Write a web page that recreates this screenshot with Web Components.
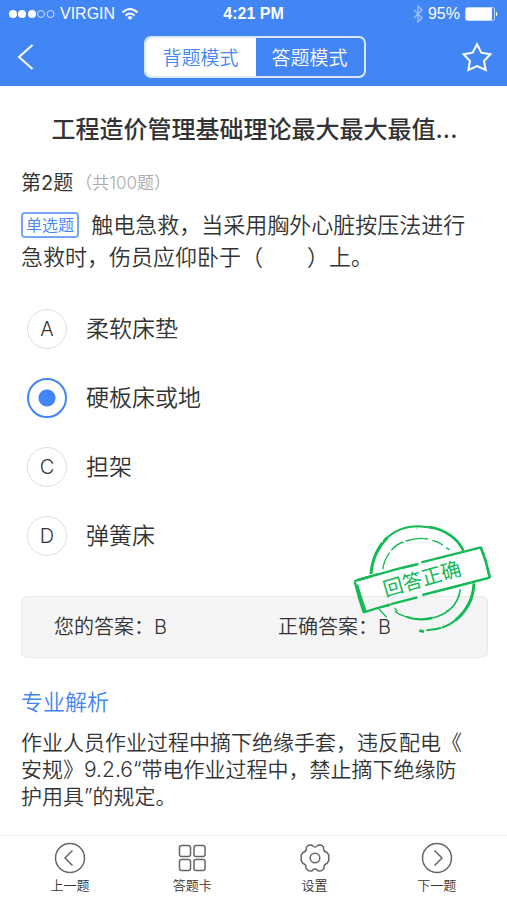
<!DOCTYPE html>
<html lang="zh-CN">
<head>
<meta charset="utf-8">
<meta name="viewport" content="width=device-width, initial-scale=1">
<title>背题模式</title>
<style>
  body {
    margin: 0;
    background: #fff;
    color: #333;
    font-family: Inter, "Noto Sans CJK SC", sans-serif;
    font-weight: 350;
  }
</style>
</head>
<body>
<quiz-app></quiz-app>

<script>
// 状态栏
class StatusBar extends HTMLElement {
  constructor() {
    super();
    this.attachShadow({ mode: 'open' });
  }

  connectedCallback() {
    this.shadowRoot.innerHTML = `
      <style>
        :host {
          display: grid;
          grid-template-columns: 1fr auto 1fr;
          align-items: center;
          height: 28px;
          padding: 0 8px;
          font: 400 16px/20px "Liberation Sans", sans-serif;
          color: #fff;
        }
        div {
          display: flex;
          align-items: center;
          gap: 5px;
        }
        .right { justify-content: flex-end; }
        .time { font-weight: 700; }
        svg { display: block; fill: none; stroke: #fff; }
      </style>
      <div>
        <svg width="47" height="10" viewBox="0 0 47 10">
          <g fill="#fff" stroke="none"><circle cx="5" cy="5" r="4"/><circle cx="14" cy="5" r="4"/><circle cx="24" cy="5" r="4"/></g>
          <g opacity=".75"><circle cx="33" cy="5" r="3.5"/><circle cx="42.500" cy="5" r="3.5"/></g>
        </svg>
        <span>VIRGIN</span>
        <svg width="20" height="14" viewBox="0 0 20 14" stroke-width="2">
          <path d="M2.500 5.500Q10-1.500 17.500 5.500M5.500 8.500Q10 4.500 14.500 8.500"/>
          <path d="M7.300 10.300Q10 8.200 12.700 10.300L10 13Z" fill="#fff" stroke="none"/>
        </svg>
      </div>
      <span class="time">4:21 PM</span>
      <div class="right">
        <svg width="10" height="18" viewBox="0 0 10 18" opacity=".5" stroke-width="1.300"><path d="M1 5L9 13L5 17V1L9 5L1 13"/></svg>
        <span>95%</span>
        <svg width="34" height="14" viewBox="0 0 34 14">
          <rect x=".5" y=".5" width="29" height="13" rx="2" opacity=".7"/>
          <rect x="1" y="1" width="26" height="12" rx="1" fill="#fff" stroke="none"/>
          <path d="M31 4.500Q34 7 31 9.500Z" fill="#fff" stroke="none"/>
        </svg>
      </div>
    `;
  }
}

// 顶部导航：返回、模式切换、收藏
class QuizHeader extends HTMLElement {
  constructor() {
    super();
    this.attachShadow({ mode: 'open' });
  }

  connectedCallback() {
    this.shadowRoot.innerHTML = `
      <style>
        :host {
          display: block;
          height: 86px;
          background: #4285f4;
        }
        .bar {
          display: grid;
          grid-template-columns: 1fr auto 1fr;
          align-items: center;
          height: 58px;
          padding: 0 15px 0 17px;
        }
        button {
          padding: 0;
          border: 0;
          background: none;
          color: #fff;
          font: inherit;
          cursor: pointer;
        }
        .star { justify-self: end; }
        .back { justify-self: start; }
        svg {
          display: block;
          fill: none;
          stroke: #fff;
          stroke-width: 2;
        }
        .modes {
          display: flex;
          box-sizing: border-box;
          height: 42px;
          border: 2px solid #d9e7fd;
          border-radius: 7px;
          overflow: hidden;
        }
        .modes button {
          width: 108px;
          padding-bottom: 2px;
          font-size: 19px;
        }
        .modes .active {
          width: 110px;
          background: #fff;
          color: #4285f4;
        }
      </style>
      <status-bar></status-bar>
      <div class="bar">
        <button class="back" aria-label="返回"><svg width="18" height="28" viewBox="0 0 18 28"><path d="M15.500 2L2 14L15.500 26"/></svg></button>
        <div class="modes">
          <button class="active">背题模式</button>
          <button>答题模式</button>
        </div>
        <button class="star" aria-label="收藏"><svg width="30" height="30" viewBox="0 0 30 30"><path d="M15 2.200L19.300 10.700L28.500 12.200L22 19L23.700 28L15 24L6.300 28L8 19L1.500 12.200L10.700 10.700Z"/></svg></button>
      </div>
    `;
  }
}

// 选项
class QuizOption extends HTMLElement {
  constructor() {
    super();
    this.attachShadow({ mode: 'open' });
  }

  connectedCallback() {
    const letter = this.getAttribute('letter');
    const checked = this.hasAttribute('checked');

    this.shadowRoot.innerHTML = `
      <style>
        :host { display: block; }
        label {
          display: flex;
          align-items: center;
          gap: 19px;
          font-size: 23px;
          line-height: 40px;
          cursor: pointer;
        }
        .mark {
          display: grid;
          place-items: center;
        }
        .mark > * { grid-area: 1 / 1; }
        input {
          appearance: none;
          box-sizing: border-box;
          width: 40px;
          height: 40px;
          margin: 0;
          border: 1px solid #ddd;
          border-radius: 50%;
        }
        input:checked {
          border: 2px solid #4285f4;
          background: radial-gradient(circle, #4285f4 8px, transparent 9px);
        }
        .letter {
          font-size: 20px;
        }
      </style>
      <label>
        <span class="mark">
          <input type="radio" name="answer" value="${letter}" ${checked ? 'checked' : ''}>
          ${checked ? '' : `<span class="letter">${letter}</span>`}
        </span>
        <slot></slot>
      </label>
    `;
  }
}

// 答题结果印章
class ResultStamp extends HTMLElement {
  constructor() {
    super();
    this.attachShadow({ mode: 'open' });
  }

  connectedCallback() {
    this.shadowRoot.innerHTML = `
      <style>
        :host { display: block; }
        svg { display: block; }
        text {
          font: 400 60px "Noto Sans CJK SC", sans-serif;
        }
      </style>
      <svg width="140" height="112" viewBox="36 36 420 336" fill="none" stroke="#12b956">
        <defs>
          <filter id="rough" x="-5%" y="-5%" width="110%" height="110%">
            <feTurbulence type="fractalNoise" baseFrequency=".12" numOctaves="2" seed="4"/>
            <feDisplacementMap in="SourceGraphic" scale="5"/>
          </filter>
        </defs>
        <g filter="url(#rough)">
          <path stroke-width="9" d="M93 192C96 151 112 113 142 83"/>
          <path stroke-width="6" d="M138 87C163 62 196 49 236 49L286 54"/>
          <path stroke-width="8" d="M268 51C313 58 354 85 370 122"/>
          <path stroke-width="9" d="M402 220C400 264 379 304 346 331"/>
          <path stroke-width="6" d="M351 327C325 350 295 360 259 361"/>
          <path stroke-width="8" d="M238 362L252 365"/>
          <path stroke-width="4" d="M128 178C131 158 138 142 149 128M154 121C164 109 177 100 190 96M197 93C215 87 242 83 264 87M277 91C291 95 302 100 309 106M318 113L328 119"/>
          <path stroke-width="4" d="M117 297L140 322M164 294L172 304M164 304C178 315 194 320 211 323"/>
          <path stroke-width="7" d="M200 321C223 329 251 330 277 324"/>
          <path stroke-width="5" d="M277 324C322 313 354 284 361 238"/>
          <path stroke-width="7" d="M44 213L184 174L235 162M244 157L423 112"/>
          <path stroke-width="8" d="M422 111L437 153L450 204M94 199L51 211"/>
          <path stroke-width="7" d="M449 203L376 222L247 255M232 262L153 282L70 307"/>
          <path stroke-width="7" d="M44 214L57 263L71 307M51 224L67 276L77 305"/>
          <path stroke-width="3" d="M431 126L446 199M54 208L116 190M90 300L151 287M385 218L446 205"/>
        </g>
        <text transform="rotate(-16 246 206)" x="246" y="228" text-anchor="middle" fill="#12b956" stroke="none">回答正确</text>
      </svg>
    `;
  }
}

// 底部工具栏按钮，图标由 slot 传入
class TabButton extends HTMLElement {
  constructor() {
    super();
    this.attachShadow({ mode: 'open' });
  }

  connectedCallback() {
    this.shadowRoot.innerHTML = `
      <style>
        :host { display: block; }
        button {
          display: flex;
          flex-direction: column;
          align-items: center;
          gap: 2px;
          width: 100%;
          padding: 6px 0 0;
          border: 0;
          background: none;
          color: #333;
          font: inherit;
          font-size: 13px;
          line-height: 18px;
          cursor: pointer;
        }
        ::slotted(svg) {
          display: block;
          width: 32px;
          height: 32px;
          fill: none;
          stroke: #666;
        }
      </style>
      <button><slot></slot><span>${this.getAttribute('label')}</span></button>
    `;
  }
}

// 页面
class QuizApp extends HTMLElement {
  constructor() {
    super();
    this.attachShadow({ mode: 'open' });
  }

  connectedCallback() {
    this.shadowRoot.innerHTML = `
      <style>
        :host {
          display: flex;
          flex-direction: column;
          min-height: 100vh;
        }
        main { padding: 0 19px 0 21px; }
        h1, h2, h3, p { margin: 0; }
        h1 {
          margin-top: 28px;
          font-size: 24px;
          line-height: 32px;
          font-weight: 500;
          text-align: center;
        }
        h2 {
          display: flex;
          align-items: center;
          gap: 2px;
          margin-top: 24px;
          font-size: 20px;
          line-height: 26px;
          font-weight: 400;
        }
        h2 small {
          font-size: 17px;
          font-weight: 350;
          color: #aaa;
        }
        .question {
          margin: 13px 12px 0 0;
          font-size: 22px;
          line-height: 32px;
        }
        .tag {
          display: inline-block;
          margin-right: 6px;
          padding: 0 3px;
          border: 2px solid #76a7f7;
          border-radius: 4px;
          color: #4285f4;
          font-size: 16px;
          line-height: 22px;
          vertical-align: 2px;
        }
        .options {
          display: grid;
          gap: 29px;
          margin: 36px 0 40px;
          padding-left: 6px;
        }
        .result {
          position: relative;
          display: grid;
          grid-template-columns: 224px 1fr;
          padding: 0 32px;
          border: 1px solid #e9e9e9;
          border-radius: 6px;
          background: #f5f5f5;
          font-size: 20px;
          line-height: 60px;
        }
        /* 印章盖在结果框右上角 */
        result-stamp {
          position: absolute;
          top: -75px;
          right: -5px;
        }
        h3 {
          margin-top: 29px;
          font-size: 22px;
          line-height: 30px;
          font-weight: 350;
          color: #4285f4;
        }
        .analysis {
          margin: 12px 18px 20px 0;
          font-size: 21px;
          line-height: 27px;
          line-break: anywhere;
        }
        nav {
          display: grid;
          grid-template-columns: repeat(4, 1fr);
          height: 65px;
          margin-top: auto;
          padding: 0 9px;
          box-sizing: border-box;
          border-top: 1px solid #eee;
        }
      </style>
      <quiz-header></quiz-header>
      <main>
        <h1>工程造价管理基础理论最大最大最值...</h1>
        <h2>第2题<small>（共100题）</small></h2>
        <p class="question"><span class="tag">单选题</span> 触电急救，当采用胸外心脏按压法进行<wbr><span>急救时，伤员应仰卧于（　　）上。</span></p>
        <div class="options">
          <quiz-option letter="A">柔软床垫</quiz-option>
          <quiz-option letter="B" checked>硬板床或地</quiz-option>
          <quiz-option letter="C">担架</quiz-option>
          <quiz-option letter="D">弹簧床</quiz-option>
        </div>
        <div class="result">
          <span>您的答案：B</span>
          <span>正确答案：B</span>
          <result-stamp></result-stamp>
        </div>
        <h3>专业解析</h3>
        <p class="analysis">作业人员作业过程中摘下绝缘手套，违反配电《安规》9.2.6“带电作业过程中，禁止摘下绝缘防护用具”的规定。</p>
      </main>
      <nav>
        <tab-button label="上一题">
          <svg viewBox="0 0 32 32" stroke-width="1.500"><circle cx="16" cy="16" r="14.500"/><path d="M18.500 8.500L11 16L18.500 23.500"/></svg>
        </tab-button>
        <tab-button label="答题卡">
          <svg viewBox="0 0 32 32" stroke-width="1.500"><rect x="3.500" y="3.500" width="11" height="11" rx="2"/><rect x="18" y="3.500" width="11" height="11" rx="2"/><rect x="3.500" y="17.500" width="11" height="11" rx="2"/><rect x="18" y="17.500" width="11" height="11" rx="2"/></svg>
        </tab-button>
        <tab-button label="设置">
          <svg viewBox="0 0 32 32" stroke-width="1.500" stroke-linejoin="round"><circle cx="16" cy="16" r="4.800"/><path d="M9.500 3.200L13 3Q14 5 16 5Q18 5 19 3L22.500 3.200L24.500 5Q24 9.500 28 10.500L29.800 13V18.500L28 21.500Q24.500 22.500 25 26.500L22.500 28.800L19 29Q18 27 16 27Q14 27 13 29L9.500 28.800L7 26.500Q7.500 22.500 4 21.500L2.200 18.500V13L4 10.500Q8 9.500 7.500 5Z"/></svg>
        </tab-button>
        <tab-button label="下一题">
          <svg viewBox="0 0 32 32" stroke-width="1.500"><circle cx="16" cy="16" r="14.500"/><path d="M13.500 8.500L21 16L13.500 23.500"/></svg>
        </tab-button>
      </nav>
    `;
  }
}

// 注册组件
customElements.define('status-bar', StatusBar);
customElements.define('quiz-header', QuizHeader);
customElements.define('quiz-option', QuizOption);
customElements.define('result-stamp', ResultStamp);
customElements.define('tab-button', TabButton);
customElements.define('quiz-app', QuizApp);
</script>
</body>
</html>
